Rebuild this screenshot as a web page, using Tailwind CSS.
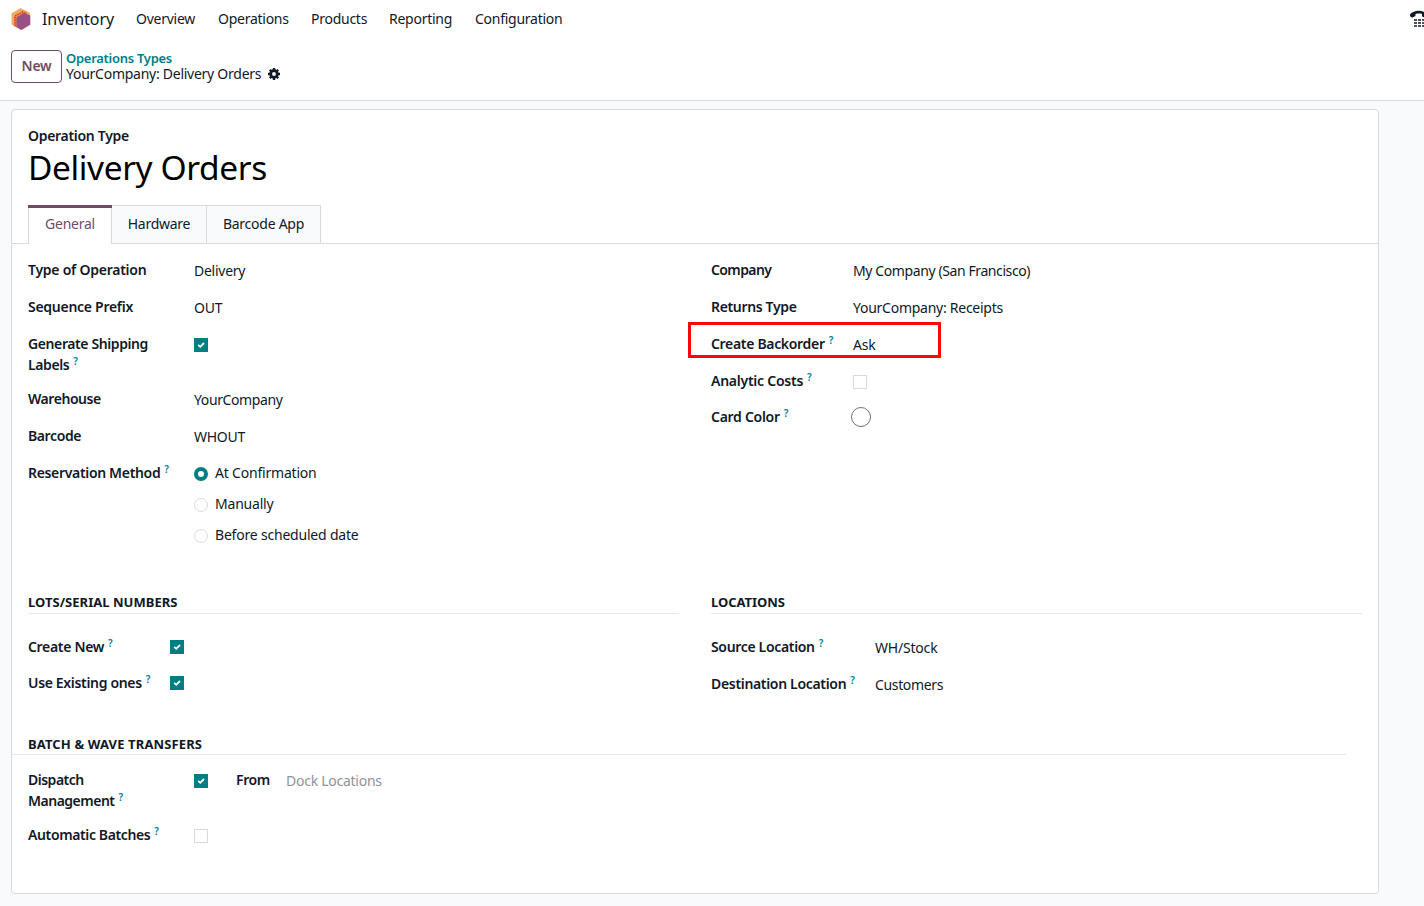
<!DOCTYPE html>
<html lang="en">
<head>
  <meta charset="UTF-8" />
  <meta name="viewport" content="width=device-width, initial-scale=1.0" />
  <title>YourCompany: Delivery Orders</title>
  <script src="https://cdn.jsdelivr.net/npm/@tailwindcss/browser@4"></script>
</head>
<body class="h-screen overflow-hidden flex flex-col bg-[#f9fafb] text-[#111827] font-['Noto_Sans',sans-serif] text-[14px] leading-[21px] tracking-[-0.26px]">

  <svg class="hidden">
    <symbol id="check" viewBox="0 0 14 14">
      <rect width="14" height="14" fill="#017e84" />
      <path d="M4.200 6.900 6.200 8.800 10 5" fill="none" stroke="#fff" stroke-width="1.800" />
    </symbol>
  </svg>

  <!-- Navbar -->
  <nav class="h-[38px] shrink-0 flex items-center bg-white pl-[11px] overflow-hidden">
    <svg class="w-5 h-[22px]" viewBox="0 0 20 22">
      <path d="M9.500 0 19 5v11l-9 6-9.500-5.500V5.500z" fill="#e9ae68" />
      <path d="M3 7.500 12 2.500l5 2-7 5v12L3 18z" fill="#f3924f" />
      <path d="M4 18V8.200l9-5M6.500 19V9.500l8.500-5" fill="none" stroke="#e5261f" stroke-width="1.400" stroke-dasharray="1.400 1.100" />
      <path d="M13 4.700 19.300 7.500v9.200L10.500 22 5.500 19v-9.500z" fill="#985184" />
    </svg>
    <span class="ml-[11px] w-[94px] text-[16px] tracking-[-0.05px]">Inventory</span>
    <span class="w-[82px] -mt-0.5">Overview</span>
    <span class="w-[93px] -mt-0.5">Operations</span>
    <span class="w-[78px] -mt-0.5">Products</span>
    <span class="w-[86px] -mt-0.5">Reporting</span>
    <span class="-mt-0.5">Configuration</span>
    <svg class="ml-auto w-[15px] h-[18px] shrink-0" viewBox="0 0 15 18">
      <path d="M1 4.800C2 2.500 6 .8 10 .8S18 3 19 5.500l-3 2-3-1V4c-2-.6-3.500-.4-6.500 0V6L3.500 7.500C1.500 7.300.8 6.300 1 4.800z" fill="#111827" />
      <path d="M5 10h10M5 13h10M5 16h10" stroke="#111827" stroke-width="1.400" stroke-dasharray="3 1" />
    </svg>
  </nav>

  <!-- Control panel -->
  <header class="h-[63px] shrink-0 flex items-start bg-white border-b border-[#d8dadd] pl-[11px] pt-3">
    <button class="w-[51px] h-[33px] pb-0.5 rounded-[4px] border border-[#714b67] text-[#714b67] font-semibold">New</button>
    <div class="ml-1 pt-px">
      <div class="text-[13px] leading-[15px] font-semibold text-[#017e84] tracking-[-0.28px]">Operations Types</div>
      <div class="flex items-center leading-[15px]">
        <span class="w-[202px]">YourCompany: Delivery Orders</span>
        <svg class="w-3 h-3" viewBox="0 0 12 12">
          <circle cx="6" cy="6" r="3.300" fill="none" stroke="#111827" stroke-width="2.800" />
          <path d="M6 0v2M6 10v2M0 6h2M10 6h2M1.800 1.800l1.400 1.400M8.800 8.800l1.400 1.400M10.200 1.800 8.800 3.200M3.200 8.800l-1.400 1.400" stroke="#111827" stroke-width="2.400" />
        </svg>
      </div>
    </div>
  </header>

  <!-- Form sheet -->
  <main class="mt-2 ml-[11px] w-[1368px] h-[785px] bg-white border border-[#d8dadd] rounded-[4px]">
    <div class="pl-4 pt-[15px]">
      <div class="font-semibold tracking-[-0.3px]">Operation Type</div>
      <h1 class="text-[33.500px] leading-[42px] text-black tracking-[-0.4px]">Delivery Orders</h1>
    </div>

    <!-- Tabs -->
    <div class="mt-[17px] h-[39px] flex pl-4 border-b border-[#d8dadd]">
      <div class="w-[84px] h-[39px] bg-white border-x border-[#d8dadd] relative text-center text-[#714b67] leading-[38px]">
        <div class="absolute -left-px -right-px top-0 h-[3px] bg-[#714b67]"></div>General
      </div>
      <div class="w-[95px] bg-[#f9fafb] border-t border-r border-[#d8dadd] text-center leading-[36px]">Hardware</div>
      <div class="w-[114px] bg-[#f9fafb] border-t border-r border-[#d8dadd] text-center leading-[36px]">Barcode App</div>
    </div>

    <!-- Main groups -->
    <div class="flex gap-8 px-4 pt-[15px] h-[330px]">
      <div class="w-[651px] grid grid-cols-[166px_1fr] auto-rows-min">
        <div class="h-[37px] font-semibold tracking-[-0.25px]">Type of Operation</div><div class="pt-px">Delivery</div>
        <div class="h-[37px] font-semibold tracking-[-0.28px]">Sequence Prefix</div><div class="pt-px">OUT</div>
        <div class="h-[55px] w-[140px] font-semibold tracking-[-0.4px]">Generate Shipping Labels<span class="relative -top-[5px] ml-1 text-[10px] leading-none text-[#0180a5]">?</span></div>
        <svg class="w-3.5 h-3.5 mt-[5px]"><use href="#check" /></svg>
        <div class="h-[37px] font-semibold tracking-[-0.45px]">Warehouse</div><div class="pt-px tracking-[-0.4px]">YourCompany</div>
        <div class="h-[37px] font-semibold tracking-[-0.4px]">Barcode</div><div class="pt-px">WHOUT</div>
        <div class="font-semibold tracking-[-0.33px]">Reservation Method<span class="relative -top-[5px] ml-1 text-[10px] leading-none text-[#0180a5]">?</span></div>
        <div class="flex flex-col gap-[10px] tracking-[-0.2px]">
          <div class="flex items-center gap-[7px]"><span class="w-3.5 h-3.5 mt-0.5 rounded-full border-[4px] border-[#017e84]"></span>At Confirmation</div>
          <div class="flex items-center gap-[7px]"><span class="w-3.5 h-3.5 mt-0.5 rounded-full border border-[#d8dadd]"></span>Manually</div>
          <div class="flex items-center gap-[7px]"><span class="w-3.5 h-3.5 mt-0.5 rounded-full border border-[#d8dadd]"></span>Before scheduled date</div>
        </div>
      </div>

      <div class="relative w-[651px] grid grid-cols-[142px_1fr] auto-rows-min">
        <div class="h-[37px] font-semibold tracking-[-0.6px]">Company</div><div class="pt-px tracking-[-0.4px]">My Company (San Francisco)</div>
        <div class="h-[37px] font-semibold tracking-[-0.35px]">Returns Type</div><div class="pt-px">YourCompany: Receipts</div>
        <div class="h-[37px] font-semibold tracking-[-0.32px]">Create Backorder<span class="relative -top-[5px] ml-1 text-[10px] leading-none text-[#0180a5]">?</span></div><div class="pt-px">Ask</div>
        <div class="h-[36px] font-semibold tracking-[-0.25px]">Analytic Costs<span class="relative -top-[5px] ml-1 text-[10px] leading-none text-[#0180a5]">?</span></div>
        <div class="w-3.5 h-3.5 mt-[5px] border border-[#d8dadd]"></div>
        <div class="font-semibold tracking-[-0.28px]">Card Color<span class="relative -top-[5px] ml-1 text-[10px] leading-none text-[#0180a5]">?</span></div>
        <div class="w-5 h-5 mt-px -ml-0.5 rounded-full border border-[#6b7280]"></div>
        <!-- Highlight around the backorder policy -->
        <div class="absolute -left-[23px] top-[63px] w-[253px] h-[36px] border-[3px] border-[#f80808]"></div>
      </div>
    </div>

    <!-- Lots and locations -->
    <div class="flex gap-8 px-4 pt-[18px] h-[159px]">
      <div class="w-[651px]">
        <h2 class="h-[22px] mb-[22px] border-b border-[#e5e7eb] text-[13px] leading-[21px] font-bold tracking-[0.03px]">LOTS/SERIAL NUMBERS</h2>
        <div class="grid grid-cols-[142px_1fr]">
          <div class="h-[36px] font-semibold tracking-[-0.32px]">Create New<span class="relative -top-[5px] ml-1 text-[10px] leading-none text-[#0180a5]">?</span></div>
          <svg class="w-3.5 h-3.5 mt-1"><use href="#check" /></svg>
          <div class="font-semibold tracking-[-0.33px]">Use Existing ones<span class="relative -top-[5px] ml-1 text-[10px] leading-none text-[#0180a5]">?</span></div>
          <svg class="w-3.5 h-3.5 mt-1"><use href="#check" /></svg>
        </div>
      </div>
      <div class="w-[651px]">
        <h2 class="h-[22px] mb-[22px] border-b border-[#e5e7eb] text-[13px] leading-[21px] font-bold tracking-[-0.05px]">LOCATIONS</h2>
        <div class="grid grid-cols-[164px_1fr]">
          <div class="h-[37px] font-semibold tracking-[-0.33px]">Source Location<span class="relative -top-[5px] ml-1 text-[10px] leading-none text-[#0180a5]">?</span></div><div class="pt-px tracking-[-0.2px]">WH/Stock</div>
          <div class="font-semibold tracking-[-0.32px]">Destination Location<span class="relative -top-[5px] ml-1 text-[10px] leading-none text-[#0180a5]">?</span></div><div class="pt-px tracking-[-0.35px]">Customers</div>
        </div>
      </div>
    </div>

    <!-- Batch and wave transfers -->
    <div class="w-[1334px]">
      <h2 class="h-[22px] pl-4 mb-[14px] border-b border-[#e5e7eb] text-[13px] leading-[23px] font-bold tracking-[0.13px]">BATCH &amp; WAVE TRANSFERS</h2>
      <div class="pl-4 grid grid-cols-[166px_42px_50px_1fr]">
        <div class="h-[55px] w-[120px] font-semibold tracking-[-0.5px]">Dispatch Management<span class="relative -top-[5px] ml-1 text-[10px] leading-none text-[#0180a5]">?</span></div>
        <svg class="w-3.5 h-3.5 mt-[5px]"><use href="#check" /></svg>
        <div class="font-semibold tracking-[-0.4px]">From</div>
        <div class="pt-px text-[#8f9299]">Dock Locations</div>
        <div class="font-semibold tracking-[-0.38px]">Automatic Batches<span class="relative -top-[5px] ml-1 text-[10px] leading-none text-[#0180a5]">?</span></div>
        <div class="w-3.5 h-3.5 mt-[5px] border border-[#d8dadd]"></div>
      </div>
    </div>
  </main>

</body>
</html>
